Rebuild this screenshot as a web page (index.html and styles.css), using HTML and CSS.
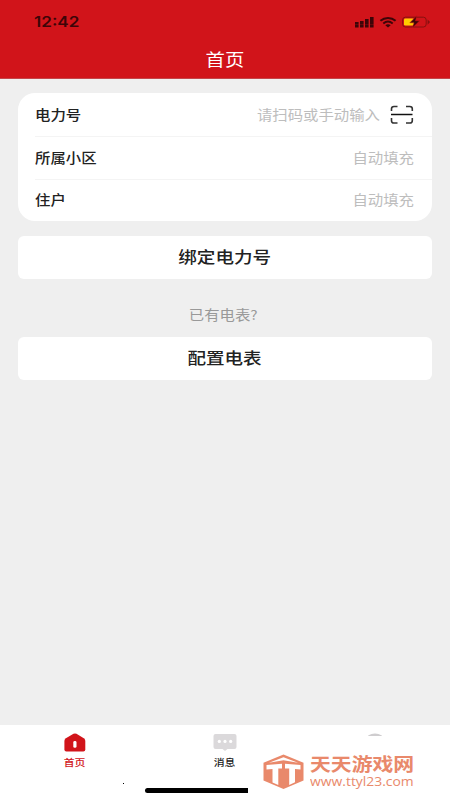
FILE: index.html
```html
<!DOCTYPE html>
<html lang="zh-CN">
<head>
<meta charset="utf-8">
<title>首页</title>
<link rel="stylesheet" href="styles.css">
</head>
<body>
<div class="app">
  <header class="header">
    <div class="status">
      <span class="time wide">12:42</span>
      <div class="status-icons">
        <svg class="signal" width="19" height="12" viewBox="0 0 19 12"><path d="M0 6h3.600v2.200H0zM0 8.600h3.600v2.900H0zM5 5h3.600v3.200H5zM5 8.600h3.600v2.900H5zM10 3h3.600v5.200H10zM10 8.600h3.600v2.900H10zM15 1h3.600v7.200H15zM15 8.600h3.600v2.900H15z"/></svg>
        <svg class="wifi" width="18" height="12" viewBox="0 0 18 12"><path d="M1.400 4.800C5.800.9 12.200.9 16.600 4.800M4.300 7.400c2.800-2.300 6.600-2.300 9.400 0" fill="none" stroke="#3d0508" stroke-width="2"/><path d="M6.300 9.200c1.600-1.200 3.800-1.200 5.400 0L9 11.600z"/></svg>
        <svg class="battery" width="29" height="14" viewBox="0 0 29 14"><rect x=".6" y="2.200" width="23.600" height="9.800" rx="2.800" fill="none" stroke="#86100f"/><path d="M25.600 4.400l2.400 2.700-2.400 2.700z" fill="#86100f"/><rect x="2" y="3.600" width="10" height="7" rx="1.400" fill="#fc0"/><path d="M14.800.8L7.800 7.800h4.200L10.300 13l7.400-7.200h-4.200z" stroke="#d1141a" stroke-width=".5"/></svg>
      </div>
    </div>
    <h1 class="title"><span class="wide">首页</span></h1>
  </header>

  <main class="content">
    <section class="card">
      <div class="row">
        <span class="label wide">电力号</span>
        <span class="hint wide">请扫码或手动输入</span>
        <svg class="scan" width="24" height="20" viewBox="0 0 24 20"><path d="M1.500 6V3.800Q1.500 1.500 4 1.500H7.500M16 1.500h3.800q2.500 0 2.500 2.300V6M1.500 13v2.700Q1.500 18 4 18H7.500M16 18h3.800q2.500 0 2.500-2.300V13" fill="none" stroke="#333" stroke-width="1.600"/><path d="M1 9.500h21.500" stroke="#111" stroke-width="1.500"/></svg>
      </div>
      <div class="row">
        <span class="label wide">所属小区</span>
        <span class="hint wide">自动填充</span>
      </div>
      <div class="row">
        <span class="label wide">住户</span>
        <span class="hint wide">自动填充</span>
      </div>
    </section>
    <button class="button"><span class="wide">绑定电力号</span></button>
    <p class="question"><span class="wide">已有电表?</span></p>
    <button class="button"><span class="wide">配置电表</span></button>
  </main>

  <nav class="tabs">
    <div class="tab active">
      <svg width="22" height="19" viewBox="0 0 22 19"><path d="M9.500.8q1.500-.8 3 0l7.300 4.400q1.500 1 1.500 2.800v8.400q0 2-2 2H2.400q-2 0-2-2V8q0-1.800 1.500-2.800z" fill="#d1141a"/><rect x="9.300" y="8" width="3.200" height="6.800" rx="1.400" fill="#fff"/></svg>
      <span class="wide">首页</span>
    </div>
    <div class="tab">
      <svg width="24" height="19" viewBox="0 0 24 19"><path d="M2.500 1h19q2 0 2 2v11q0 2-2 2h-7L12 17.900l-2.500-1.900h-7q-2 0-2-2V3q0-2 2-2z" fill="#dbd9db"/><circle cx="6.300" cy="8.400" r="1.600" fill="#fff"/><circle cx="12" cy="8.400" r="1.600" fill="#fff"/><circle cx="17.700" cy="8.400" r="1.600" fill="#fff"/></svg>
      <span class="wide">消息</span>
    </div>
    <div class="tab">
      <svg width="24" height="19" viewBox="0 0 24 19"><ellipse cx="12" cy="6.500" rx="9" ry="5.900" fill="#cfcdcf"/></svg>
    </div>
    <i class="speck"></i>
    <i class="home-bar"></i>
    <div class="watermark">
      <svg class="mark" width="42" height="36" viewBox="0 0 42 36"><path d="M20.500.5L40.500 8.800V26.500L20.500 35 .5 26.500V8.800z" fill="#e9896b"/><path d="M6 8.800L20.500 3.200 35 8.800 20.500 6.300z" fill="#fff"/><path d="M3.500 11l15.500-1.300v4.800h-3.700V31L9.500 28.500V14.900l-6 .6zM22 9.700L37.500 11v4.500l-5.500-.5v13.300L26.200 31V14.500H22z" fill="#fff"/></svg>
      <div class="brand">
        <span class="brand-name wide">天天游戏网</span>
        <span class="brand-url wide">www.ttyl23.com</span>
      </div>
    </div>
  </nav>
</div>
</body>
</html>
```
FILE: styles.css
```css
* { box-sizing: border-box; }
body {
  margin: 0;
  font-family: "Noto Sans CJK SC", sans-serif;
  color: #222;
  background: #efefef;
}
.app {
  width: 450px;
  height: 800px;
  display: flex;
  flex-direction: column;
  overflow: hidden;
}
.wide {
  display: inline-block;
  transform: scaleX(1.14);
  white-space: nowrap;
}
.header {
  height: 79px;
  background: #d1141a;
  border-bottom: 1px solid #c4464a;
}
.status {
  height: 44px;
  padding: 0 19px 0 34px;
  display: flex;
  align-items: center;
  justify-content: space-between;
}
.time {
  font: 600 15px/20px Inter, sans-serif;
  color: #3d0508;
  transform-origin: left;
}
.status-icons {
  display: flex;
  align-items: center;
  gap: 5px;
}
.status-icons svg { fill: #3d0508; }
.title {
  margin: 0;
  height: 30px;
  text-align: center;
  font-size: 17px;
  font-weight: 400;
  line-height: 30px;
  color: #fff;
}
.content {
  flex: 1;
  padding: 14px 18px 0;
}
.card {
  height: 128px;
  padding-left: 17px;
  border-radius: 17px;
  background: #fff;
}
.row {
  height: 43px;
  padding: 0 18px 2px 0;
  display: flex;
  align-items: center;
  font-size: 13.500px;
  line-height: 20px;
}
.row + .row {
  height: 42.500px;
  border-top: 1px solid #f4f4f4;
}
.label {
  font-weight: 500;
  transform-origin: left;
}
.hint {
  margin-left: auto;
  color: #bdbdbd;
  transform-origin: right;
}
.scan {
  margin-left: 10px;
  margin-top: 2px;
}
.button {
  display: block;
  width: 100%;
  height: 43px;
  margin: 15px 0 0;
  padding: 0;
  border: 0;
  border-radius: 6px;
  background: #fff;
  color: #222;
  font: 500 16.300px/41px "Noto Sans CJK SC", sans-serif;
}
.button .wide { padding-bottom: 2px; }
.question {
  margin: 25px 0 0;
  height: 20px;
  text-align: center;
  font-size: 13.500px;
  line-height: 20px;
  color: #999;
}
.question span { margin-left: -3px; }
.question + .button { margin-top: 13px; }
.tabs {
  position: relative;
  height: 75px;
  display: grid;
  grid-template-columns: repeat(3, 1fr);
  background: #fff;
}
.tab {
  padding-top: 8px;
  display: flex;
  flex-direction: column;
  align-items: center;
  font-size: 9.500px;
  font-weight: 500;
  line-height: 14px;
  gap: 3px;
}
.active { color: #d1141a; }
.speck {
  position: absolute;
  left: 123px;
  top: 58px;
  width: 1px;
  height: 1px;
  background: #000;
}
.home-bar {
  position: absolute;
  left: 145px;
  top: 63px;
  width: 160px;
  height: 5px;
  border-radius: 3px;
  background: #000;
}
.watermark {
  position: absolute;
  left: 248px;
  top: 11px;
  width: 202px;
  height: 64px;
  padding: 18px 0 0 15px;
  display: flex;
  gap: 5px;
  background: #fff;
  color: #e9896b;
}
.brand {
  display: flex;
  flex-direction: column;
  align-items: flex-start;
}
.brand .wide { transform-origin: left; }
.brand-name {
  font-size: 18.300px;
  font-weight: 700;
  line-height: 19px;
}
.brand-url {
  margin-top: 2px;
  font: 12.200px/13px "Open Sans", sans-serif;
}
```
